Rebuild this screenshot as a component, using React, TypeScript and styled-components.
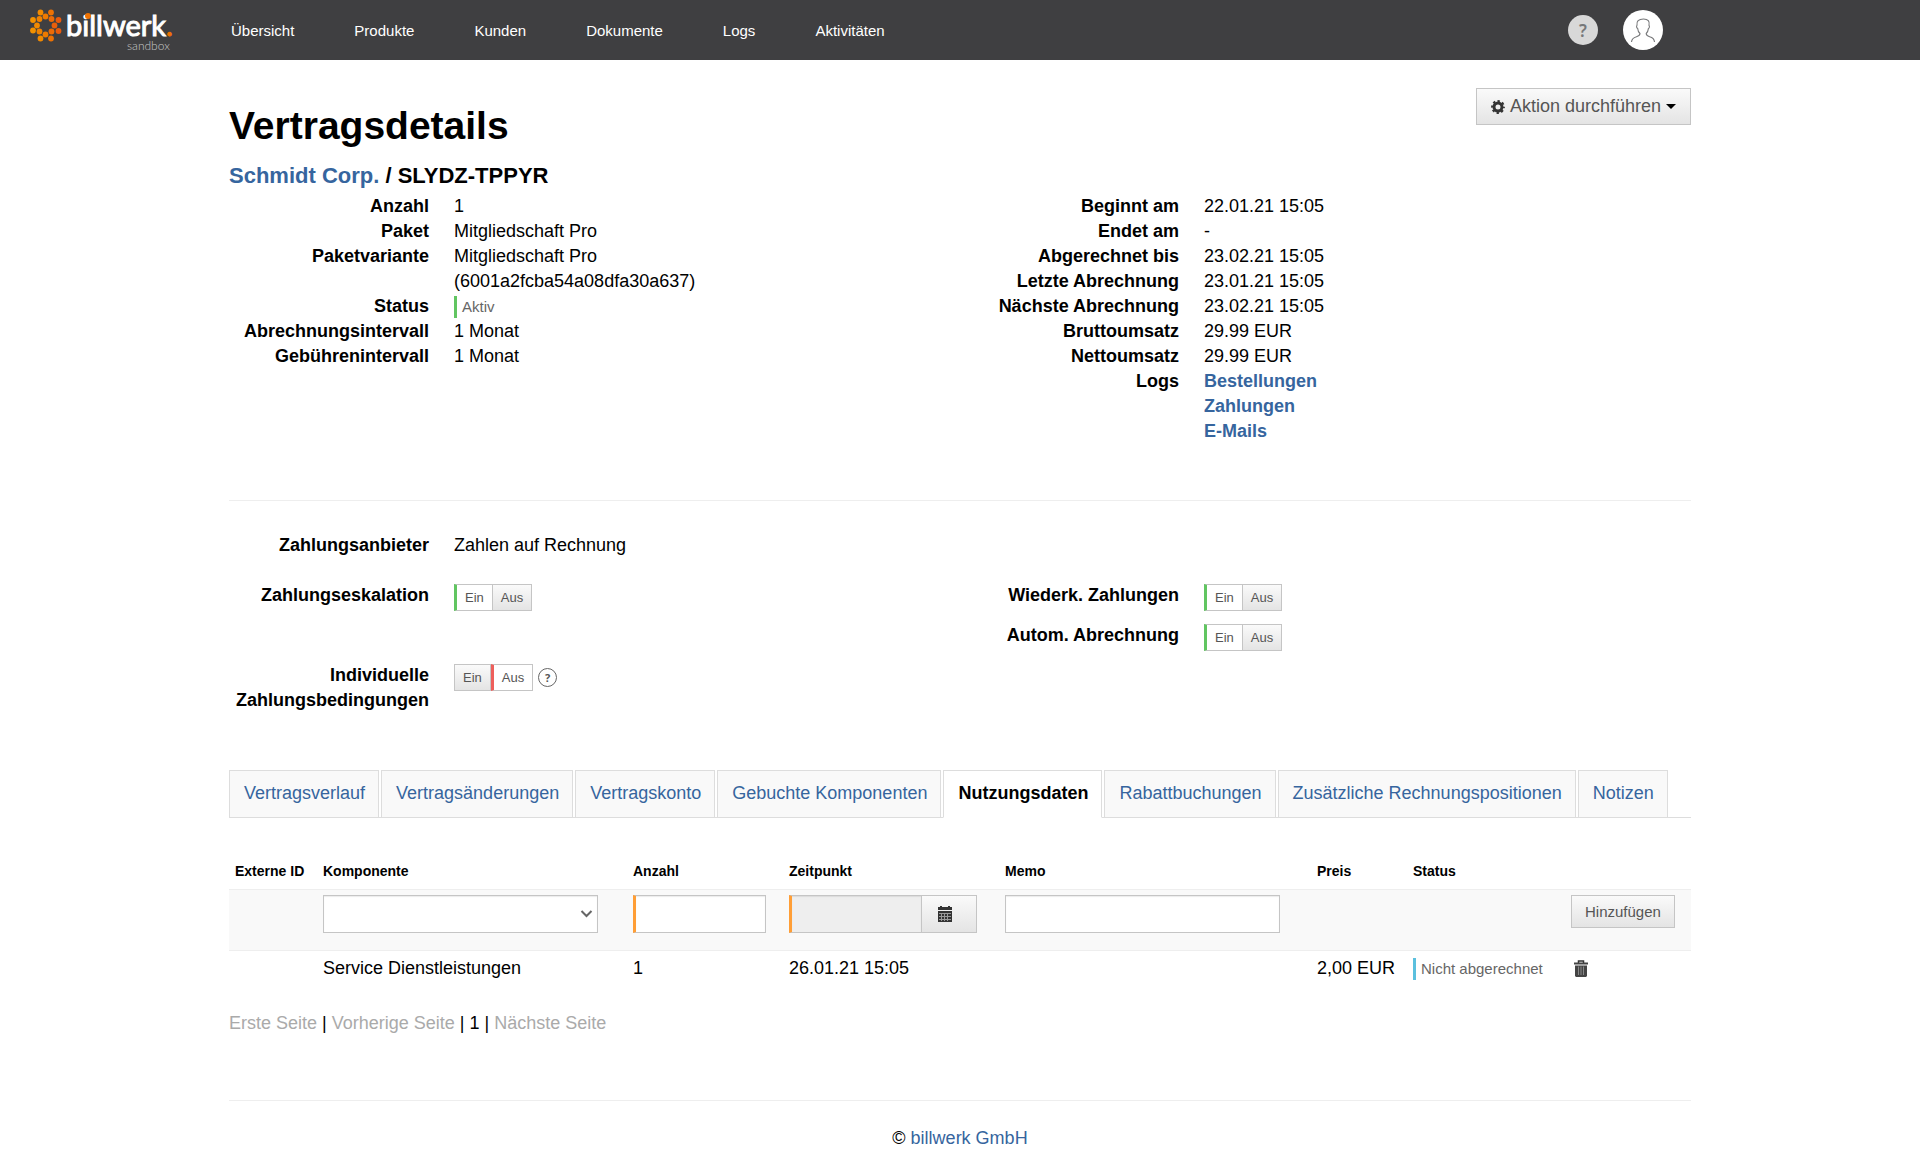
import React from "react";
import styled, { createGlobalStyle, css } from "styled-components";

const sans = `"Liberation Sans", Arial, Helvetica, sans-serif`;
const blue = "#36659e";

const GlobalStyle = createGlobalStyle`
  *, *::before, *::after { box-sizing: border-box; }
  body {
    margin: 0;
    background: #fff;
    color: #000;
    font-family: ${sans};
    font-size: 18px;
    line-height: 25px;
  }
  a { color: ${blue}; text-decoration: none; }
  button, input, select { font-family: inherit; margin: 0; border-radius: 0; }
`;

const Header = styled.header`
  display: grid;
  grid-template-columns: minmax(229px, 1fr) minmax(0, 1462px) minmax(0, 1fr);
  align-items: center;
  height: 60px;
  background: #3f3f41;
`;

const LogoLink = styled.a`
  display: block;
  padding-left: 28px;
  height: 60px;
`;

const HeaderBar = styled.div`
  display: flex;
  align-items: center;
  justify-content: space-between;
  padding: 0 28px 0 2px;
`;

const Nav = styled.nav`
  display: flex;
  gap: 60px;
`;

const NavLink = styled.a`
  color: #fff;
  font-size: 15px;
`;

const HeaderTools = styled.div`
  display: flex;
  align-items: center;
  gap: 25px;
`;

const RoundButton = styled.button<{ $size: number; $bg: string }>`
  display: flex;
  align-items: center;
  justify-content: center;
  width: ${(p) => p.$size}px;
  height: ${(p) => p.$size}px;
  padding: 0;
  border: 0;
  border-radius: 50%;
  background: ${(p) => p.$bg};
  color: #77787a;
  font: 600 17px "Noto Sans", sans-serif;
`;

const Page = styled.div`
  max-width: 1462px;
  margin: 0 auto;
`;

const TitleRow = styled.div`
  display: flex;
  justify-content: space-between;
  align-items: flex-start;
  padding-top: 28px;
`;

const Title = styled.h1`
  margin: 13px 0 0;
  font-size: 39px;
  line-height: 50px;
`;

const Subtitle = styled.h2`
  margin: 12px 0 6px;
  font-size: 22px;
  line-height: 25px;
`;

const raised = css`
  border: 1px solid #c5c5c5;
  background: linear-gradient(#fafafa, #e4e4e4);
  color: #555;
`;

const ActionButton = styled.button`
  ${raised}
  display: flex;
  align-items: center;
  gap: 5px;
  height: 37px;
  padding: 0 14px;
  font-size: 18px;
`;

const Caret = styled.span`
  border: 5px solid transparent;
  border-top-color: #000;
  border-bottom: 0;
`;

const Columns = styled.div<{ $bottom: number }>`
  display: grid;
  grid-template-columns: 1fr 1fr;
  gap: 38px;
  padding-bottom: ${(p) => p.$bottom}px;
`;

const Facts = styled.dl`
  display: grid;
  grid-template-columns: 200px 1fr;
  column-gap: 25px;
  align-content: start;
  margin: 0;
`;

const Term = styled.dt`
  font-weight: bold;
  text-align: right;
`;

const Detail = styled.dd`
  margin: 0;
`;

const LogLink = styled.a`
  display: block;
  font-weight: bold;
`;

const StatusTag = styled.span<{ $color: string }>`
  display: block;
  height: 22px;
  margin-top: 2px;
  padding-left: 5px;
  border-left: 3px solid ${(p) => p.$color};
  color: #666;
  font-size: 15px;
  line-height: 22px;
  white-space: nowrap;
`;

const Rule = styled.hr`
  height: 1px;
  margin: 0;
  border: 0;
  background: #eee;
`;

const Settings = styled.div`
  display: flex;
  flex-direction: column;
  gap: 12px;
  padding-top: 32px;
`;

const Setting = styled.div<{ $min: number }>`
  display: grid;
  grid-template-columns: 200px 1fr;
  column-gap: 25px;
  align-items: start;
  min-height: ${(p) => p.$min}px;
`;

const Toggle = styled.div`
  display: flex;
  align-items: center;
  gap: 5px;
  padding-top: 1px;
`;

const ToggleGroup = styled.div`
  display: flex;
`;

const ToggleButton = styled.button<{ $accent?: string; $joined?: boolean }>`
  ${raised}
  height: 27px;
  padding: 0 8px;
  font-size: 13px;
  line-height: 25px;
  ${(p) => p.$joined && css`border-left-width: 0;`}
  ${(p) =>
    p.$accent &&
    css`
      background: #fff;
      border-left: 3px solid ${p.$accent};
    `}
`;

const HelpButton = styled.button`
  width: 19px;
  height: 19px;
  padding: 0;
  border: 1px solid #666;
  border-radius: 50%;
  background: #fff;
  color: #555;
  font: bold 11px/17px "Noto Sans", sans-serif;
`;

const Tabs = styled.nav`
  display: flex;
  gap: 2px;
  border-bottom: 1px solid #ddd;
`;

const Tab = styled.a<{ $active?: boolean }>`
  height: 48px;
  margin-bottom: -1px;
  padding: 10px 13px 0 14px;
  border: 1px solid #ddd;
  background: #f9f9f9;
  white-space: nowrap;
  ${(p) =>
    p.$active &&
    css`
      background: #fff;
      border-bottom-color: #fff;
      color: #000;
      font-weight: bold;
    `}
`;

const Table = styled.table`
  width: 100%;
  margin-top: 36px;
  border-collapse: collapse;
  table-layout: fixed;
`;

const HeadCell = styled.th`
  padding: 5px 6px;
  font-size: 14px;
  line-height: 25px;
  text-align: left;
  white-space: nowrap;
`;

const EntryRow = styled.tr`
  height: 61px;
  background: #f9f9f9;
  border-top: 1px solid #eee;
  border-bottom: 1px solid #eee;
`;

const Cell = styled.td`
  padding: 5px 6px;
  vertical-align: top;
  white-space: nowrap;
`;

const field = css`
  display: block;
  height: 38px;
  max-width: 100%;
  border: 1px solid #c5c5c5;
  background: #fff;
  box-shadow: inset 0 1px 1px rgba(0, 0, 0, 0.08);
  font-size: 18px;
`;

const SelectWrap = styled.div`
  display: grid;
  align-items: center;
  width: 275px;
  max-width: 100%;
  & > * { grid-area: 1 / 1; }
  & > svg { justify-self: end; margin-right: 5px; pointer-events: none; }
`;

const Select = styled.select`
  ${field}
  width: 100%;
  appearance: none;
`;

const Input = styled.input<{ $width: number; $required?: boolean }>`
  ${field}
  width: ${(p) => p.$width}px;
  ${(p) => p.$required && css`border-left: 3px solid #ff9e36;`}
  &:read-only { background: #eee; }
`;

const DateGroup = styled.div`
  display: flex;
`;

const DateButton = styled.button`
  ${raised}
  display: flex;
  align-items: center;
  width: 55px;
  height: 38px;
  padding: 0 15px;
  border-left: 0;
`;

const AddButton = styled.button`
  ${raised}
  height: 33px;
  padding: 0 13px;
  font-size: 15px;
`;

const IconButton = styled.button`
  display: block;
  margin: 4px 0 0 3px;
  padding: 0;
  border: 0;
  background: none;
`;

const Pager = styled.nav`
  padding: 25px 0 64px;
`;

const Muted = styled.span`
  color: #aaa;
`;

const Footer = styled.footer`
  padding: 25px 0 14px;
  text-align: center;
`;

function Logo() {
  const dots: [number, number, string][] = [
    [12.5, 12.5, "#f28a00"], [23, 12.5, "#ee7203"], [5, 20, "#f39200"], [11.5, 19, "#f08200"],
    [17.5, 16.5, "#ef7a00"], [23.5, 19, "#ed6b06"], [30.5, 20, "#ea5b0c"], [9, 25.5, "#f18a00"],
    [26.5, 25.5, "#ea5f0b"], [5, 30.5, "#f39200"], [11.5, 31.5, "#f08200"], [17.5, 34.5, "#ef7a00"],
    [23.5, 31.5, "#ed6b06"], [30.5, 31, "#ea5b0c"], [12.5, 38.5, "#f28a00"], [23, 38.5, "#ee7203"],
  ];
  return (
    <svg width="152" height="60" role="img" aria-label="billwerk sandbox">
      {dots.map(([x, y, c]) => (
        <circle key={`${x}-${y}`} cx={x} cy={y} r="2.9" fill={c} />
      ))}
      <text x="38" y="36" fontFamily="Lato, sans-serif" fontWeight="400" fontSize="29" fill="#fff" stroke="#fff" strokeWidth="1">
        billwerk<tspan fill="#ee7203" stroke="#ee7203">.</tspan>
      </text>
      <circle cx="60" cy="16" r="3" fill="#ee7203" />
      <text x="99" y="50" fontFamily="Lato, sans-serif" fontWeight="300" fontSize="12" fill="#c8c8c8">
        sandbox
      </text>
    </svg>
  );
}

const UserIcon = () => (
  <svg width="26" height="26" viewBox="0 0 26 26" fill="none" stroke="#77787a" strokeWidth="1.1">
    <path d="M1.500 25c.2-3.400 2-4.500 5-5.300 2.200-.6 3.500-1.300 3.500-3.200-1.400-1.200-2.200-3.300-2.300-5-1.400-.8-1.300-2.300-.7-3.200C6.300 4.500 8.500 2 13.500 2c4.500 0 6.500 2.500 5.500 6.300.7.900.6 2.600-.6 3.300-.2 1.800-.8 3.600-2.200 4.900 0 1.900 1.200 2.600 3.400 3.200 3 .8 4.700 1.900 4.900 5.300" />
  </svg>
);

const GearIcon = () => (
  <svg width="14" height="14" viewBox="0 0 14 14" fill="none" stroke="#333">
    <circle cx="7" cy="7" r="4" strokeWidth="3" />
    <circle cx="7" cy="7" r="6" strokeWidth="1.800" strokeDasharray="2.400 2.312" strokeDashoffset="1.200" />
  </svg>
);

const CalendarIcon = () => (
  <svg width="16" height="16" viewBox="0 0 16 16">
    <path fill="#333" d="M1 1h2V0h2v1h6V0h2v1h2v3H1zM1 5h14v11H1z" />
    <path stroke="#999" strokeWidth="1" d="M2 7.500h12M2 10.500h12M2 13.500h12M4.500 7v8M7.500 7v8M10.500 7v8" />
  </svg>
);

const TrashIcon = () => (
  <svg width="14" height="17" viewBox="0 0 14 17">
    <path fill="none" stroke="#333" strokeWidth="1.500" d="M4.500 3V1h5v2" />
    <path fill="#444" d="M0 2.500h14v2H0zM1 5.500h12V16l-1 1H2l-1-1z" />
    <path stroke="#888" d="M4.500 6.500v8.500M7 6.500v8.500M9.500 6.500v8.500" />
  </svg>
);

const ChevronIcon = () => (
  <svg width="13" height="10" viewBox="0 0 13 10" fill="none" stroke="#666" strokeWidth="2">
    <path d="M1.500 2l5 5 5-5" />
  </svg>
);

function OnOff({ label, on, children }: { label: string; on: boolean; children?: React.ReactNode }) {
  return (
    <Toggle>
      <ToggleGroup role="group" aria-label={label}>
        <ToggleButton type="button" aria-pressed={on} $accent={on ? "#61c561" : undefined}>Ein</ToggleButton>
        <ToggleButton type="button" aria-pressed={!on} $joined $accent={on ? undefined : "#ee5f5b"}>Aus</ToggleButton>
      </ToggleGroup>
      {children}
    </Toggle>
  );
}

const navItems = ["Übersicht", "Produkte", "Kunden", "Dokumente", "Logs", "Aktivitäten"];
const tabs = [
  "Vertragsverlauf", "Vertragsänderungen", "Vertragskonto", "Gebuchte Komponenten",
  "Nutzungsdaten", "Rabattbuchungen", "Zusätzliche Rechnungspositionen", "Notizen",
];
const columnWidths = [88, 310, 156, 216, 312, 96, 158, 126];
const headings = ["Externe ID", "Komponente", "Anzahl", "Zeitpunkt", "Memo", "Preis", "Status", ""];

const contractFacts: [string, React.ReactNode][] = [
  ["Anzahl", "1"],
  ["Paket", "Mitgliedschaft Pro"],
  ["Paketvariante", <>Mitgliedschaft Pro<br />(6001a2fcba54a08dfa30a637)</>],
  ["Status", <StatusTag $color="#61c561">Aktiv</StatusTag>],
  ["Abrechnungsintervall", "1 Monat"],
  ["Gebührenintervall", "1 Monat"],
];

const billingFacts: [string, React.ReactNode][] = [
  ["Beginnt am", "22.01.21 15:05"],
  ["Endet am", "-"],
  ["Abgerechnet bis", "23.02.21 15:05"],
  ["Letzte Abrechnung", "23.01.21 15:05"],
  ["Nächste Abrechnung", "23.02.21 15:05"],
  ["Bruttoumsatz", "29.99 EUR"],
  ["Nettoumsatz", "29.99 EUR"],
  ["Logs", ["Bestellungen", "Zahlungen", "E-Mails"].map((t) => <LogLink href="#" key={t}>{t}</LogLink>)],
];

const FactList = ({ items }: { items: [string, React.ReactNode][] }) => (
  <Facts>
    {items.map(([term, value]) => (
      <React.Fragment key={term}>
        <Term>{term}</Term>
        <Detail>{value}</Detail>
      </React.Fragment>
    ))}
  </Facts>
);

const SettingRow = ({ label, min = 28, children }: { label: string; min?: number; children: React.ReactNode }) => (
  <Setting $min={min}>
    <Term as="div">{label}</Term>
    {children}
  </Setting>
);

export default function App() {
  return (
    <>
      <GlobalStyle />
      <Header>
        <LogoLink href="#"><Logo /></LogoLink>
        <HeaderBar>
          <Nav>{navItems.map((item) => <NavLink href="#" key={item}>{item}</NavLink>)}</Nav>
          <HeaderTools>
            <RoundButton type="button" $size={30} $bg="#d8d8d8">?</RoundButton>
            <RoundButton type="button" $size={40} $bg="#fff" aria-label="Benutzerkonto"><UserIcon /></RoundButton>
          </HeaderTools>
        </HeaderBar>
      </Header>
      <Page>
        <main>
          <TitleRow>
            <Title>Vertragsdetails</Title>
            <ActionButton type="button"><GearIcon />Aktion durchführen<Caret /></ActionButton>
          </TitleRow>
          <Subtitle><a href="#">Schmidt Corp.</a> / SLYDZ-TPPYR</Subtitle>
          <Columns $bottom={56}>
            <FactList items={contractFacts} />
            <FactList items={billingFacts} />
          </Columns>
          <Rule />
          <Columns $bottom={57}>
            <Settings>
              <SettingRow label="Zahlungsanbieter" min={38}>Zahlen auf Rechnung</SettingRow>
              <SettingRow label="Zahlungseskalation" min={68}><OnOff label="Zahlungseskalation" on /></SettingRow>
              <SettingRow label="Individuelle Zahlungsbedingungen">
                <OnOff label="Individuelle Zahlungsbedingungen" on={false}>
                  <HelpButton type="button">?</HelpButton>
                </OnOff>
              </SettingRow>
            </Settings>
            <Settings>
              <Setting $min={38} />
              <SettingRow label="Wiederk. Zahlungen"><OnOff label="Wiederk. Zahlungen" on /></SettingRow>
              <SettingRow label="Autom. Abrechnung"><OnOff label="Autom. Abrechnung" on /></SettingRow>
            </Settings>
          </Columns>
          <Tabs>
            {tabs.map((tab) => <Tab href="#" key={tab} $active={tab === "Nutzungsdaten"}>{tab}</Tab>)}
          </Tabs>
          <Table>
            <colgroup>{columnWidths.map((w, i) => <col key={i} width={w} />)}</colgroup>
            <thead>
              <tr>{headings.map((h) => <HeadCell key={h} scope="col">{h}</HeadCell>)}</tr>
            </thead>
            <tbody>
              <EntryRow>
                <Cell />
                <Cell>
                  <SelectWrap>
                    <Select aria-label="Komponente" defaultValue=""><option value="" /></Select>
                    <ChevronIcon />
                  </SelectWrap>
                </Cell>
                <Cell><Input aria-label="Anzahl" $width={133} $required /></Cell>
                <Cell>
                  <DateGroup>
                    <Input aria-label="Zeitpunkt" $width={133} $required readOnly />
                    <DateButton type="button" aria-label="Datum wählen"><CalendarIcon /></DateButton>
                  </DateGroup>
                </Cell>
                <Cell><Input aria-label="Memo" $width={275} /></Cell>
                <Cell />
                <Cell />
                <Cell><AddButton type="button">Hinzufügen</AddButton></Cell>
              </EntryRow>
              <tr>
                <Cell />
                <Cell>Service Dienstleistungen</Cell>
                <Cell>1</Cell>
                <Cell>26.01.21 15:05</Cell>
                <Cell />
                <Cell>2,00 EUR</Cell>
                <Cell><StatusTag $color="#5bc0de">Nicht abgerechnet</StatusTag></Cell>
                <Cell><IconButton type="button" aria-label="Löschen"><TrashIcon /></IconButton></Cell>
              </tr>
            </tbody>
          </Table>
          <Pager>
            <Muted>Erste Seite</Muted> | <Muted>Vorherige Seite</Muted> | 1 | <Muted>Nächste Seite</Muted>
          </Pager>
        </main>
        <Rule />
        <Footer>© <a href="#">billwerk GmbH</a></Footer>
      </Page>
    </>
  );
}
